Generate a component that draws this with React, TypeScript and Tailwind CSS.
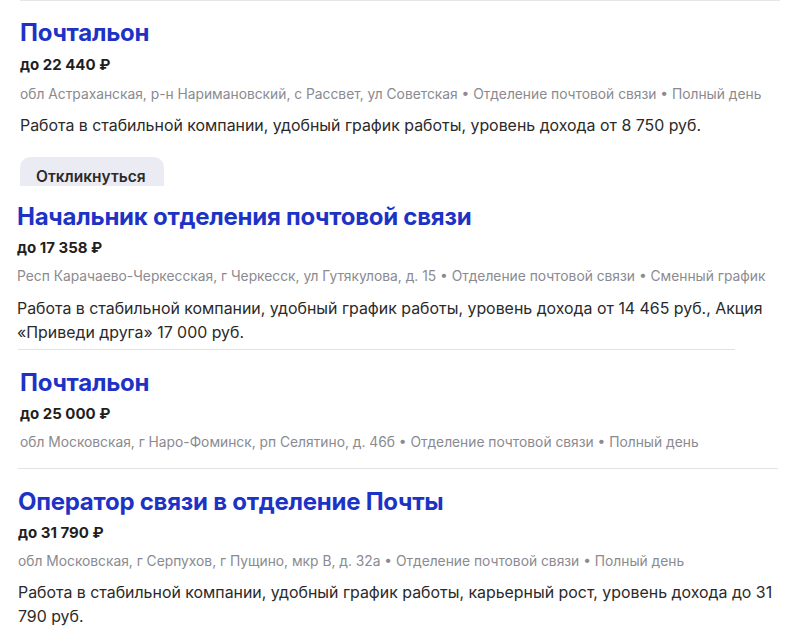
import React from "react";

const font = { fontFamily: "Inter, 'Noto Sans', sans-serif" };

function Title({ children }: { children: React.ReactNode }) {
  return (
    <div className="text-[24px] leading-[32px] font-bold text-[#1d33c6] whitespace-nowrap tracking-[-0.25px]">
      {children}
    </div>
  );
}

function Price({ children }: { children: React.ReactNode }) {
  return (
    <div className="text-[15px] leading-[20px] font-bold text-[#1f1f1f] whitespace-nowrap">
      {children}
    </div>
  );
}

function Addr({ children }: { children: React.ReactNode }) {
  return (
    <div className="text-[13.8px] leading-[20px] text-[#8a8a90] whitespace-nowrap">
      {children}
    </div>
  );
}

function Desc({ lines }: { lines: string[] }) {
  return (
    <div className="text-[15.9px] leading-[24px] text-[#2a2a2a]">
      {lines.map((l, i) => (
        <div key={i} className="whitespace-nowrap">
          {l}
        </div>
      ))}
    </div>
  );
}

export default function App() {
  return (
    <div className="w-[799px] h-[630px] bg-white overflow-hidden flex flex-col" style={font}>
      {/* Fragment 1 */}
      <div className="h-[186px] overflow-hidden shrink-0 flex flex-col">
        <div className="ml-[20px] w-[760px] border-t border-[#e6e6ea]" />
        <div className="pl-[20px] pt-[16px] flex flex-col">
          <Title>Почтальон</Title>
          <div className="mt-[6px]">
            <Price>до 22 440 ₽</Price>
          </div>
          <div className="mt-[9px]">
            <Addr>
              обл Астраханская, р-н Наримановский, с Рассвет, ул Советская • Отделение почтовой связи • Полный день
            </Addr>
          </div>
          <div className="mt-[10px]">
            <Desc lines={["Работа в стабильной компании, удобный график работы, уровень дохода от 8 750 руб."]} />
          </div>
          <div className="mt-[19px]">
            <div className="w-[144px] h-[44px] rounded-[10px] bg-[#ebebf3] pl-[16px] pt-[10px] text-[15.5px] leading-[20px] font-semibold text-[#2a2a2a]">
              Откликнуться
            </div>
          </div>
        </div>
      </div>

      {/* Fragment 2 */}
      <div className="shrink-0 flex flex-col pl-[17px] pt-[15px]">
        <Title>Начальник отделения почтовой связи</Title>
        <div className="mt-[5px]">
          <Price>до 17 358 ₽</Price>
        </div>
        <div className="mt-[8px]">
          <Addr>
            Респ Карачаево-Черкесская, г Черкесск, ул Гутякулова, д. 15 • Отделение почтовой связи • Сменный график
          </Addr>
        </div>
        <div className="mt-[11px]">
          <Desc
            lines={[
              "Работа в стабильной компании, удобный график работы, уровень дохода от 14 465 руб., Акция",
              "«Приведи друга» 17 000 руб.",
            ]}
          />
        </div>
        <div className="mt-[4px] ml-[1px] w-[717px] border-t border-[#e2e2e6]" />
      </div>

      {/* Fragment 3 */}
      <div className="shrink-0 flex flex-col pl-[20px] pt-[17px]">
        <Title>Почтальон</Title>
        <div className="mt-[5px]">
          <Price>до 25 000 ₽</Price>
        </div>
        <div className="mt-[8px]">
          <Addr>обл Московская, г Наро-Фоминск, рп Селятино, д. 46б • Отделение почтовой связи • Полный день</Addr>
        </div>
        <div className="mt-[16px] -ml-[2px] w-[760px] border-t border-[#e2e2e6]" />
      </div>

      {/* Fragment 4 */}
      <div className="shrink-0 flex flex-col pl-[18px] pt-[17px]">
        <Title>Оператор связи в отделение Почты</Title>
        <div className="mt-[5px]">
          <Price>до 31 790 ₽</Price>
        </div>
        <div className="mt-[8px]">
          <Addr>
            обл Московская, г Серпухов, г Пущино, мкр В, д. 32а • Отделение почтовой связи • Полный день
          </Addr>
        </div>
        <div className="mt-[10px]">
          <Desc
            lines={[
              "Работа в стабильной компании, удобный график работы, карьерный рост, уровень дохода до 31",
              "790 руб.",
            ]}
          />
        </div>
      </div>
    </div>
  );
}
